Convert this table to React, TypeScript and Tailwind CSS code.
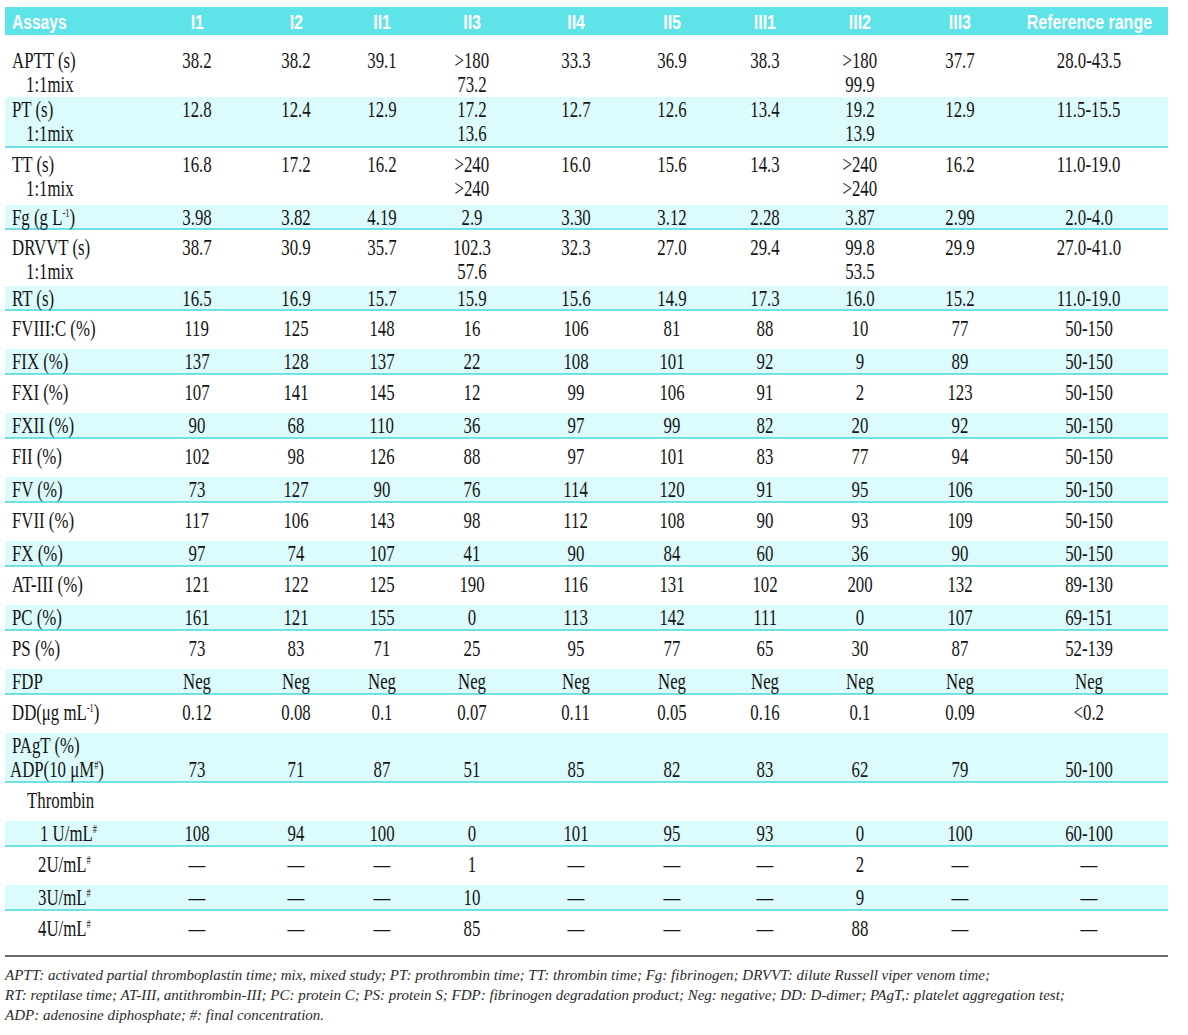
import React from "react";

type Cell = string | string[];

interface RowData {
  label: [React.ReactNode, string][];
  values?: Cell[];
  shaded?: boolean;
  size: string;
  valuePad?: string;
}

const grid =
  "grid grid-cols-[145px_94px_104px_68px_112px_96px_96px_90px_100px_100px_158px]";

const sup = (s: string) => (
  <span className="relative -top-[8px] text-[12px] leading-none">{s}</span>
);

const dash = "—";
const neg = "Neg";
const f150 = "50-150";

const rows: RowData[] = [
  {
    label: [["APTT (s)", "pl-[7px]"], ["1:1mix", "pl-[21px]"]],
    values: ["38.2", "38.2", "39.1", [">180", "73.2"], "33.3", "36.9", "38.3", [">180", "99.9"], "37.7", "28.0-43.5"],
    size: "h-[62px] pt-[13px]",
  },
  {
    label: [["PT (s)", "pl-[7px]"], ["1:1mix", "pl-[21px]"]],
    values: ["12.8", "12.4", "12.9", ["17.2", "13.6"], "12.7", "12.6", "13.4", ["19.2", "13.9"], "12.9", "11.5-15.5"],
    shaded: true,
    size: "h-[51px] pt-0",
  },
  {
    label: [["TT (s)", "pl-[7px]"], ["1:1mix", "pl-[21px]"]],
    values: ["16.8", "17.2", "16.2", [">240", ">240"], "16.0", "15.6", "14.3", [">240", ">240"], "16.2", "11.0-19.0"],
    size: "h-[57px] pt-[4px]",
  },
  {
    label: [[<>Fg (g L{sup("-1")})</>, "pl-[7px]"]],
    values: ["3.98", "3.82", "4.19", "2.9", "3.30", "3.12", "2.28", "3.87", "2.99", "2.0-4.0"],
    shaded: true,
    size: "h-[25px] pt-0",
  },
  {
    label: [["DRVVT (s)", "pl-[7px]"], ["1:1mix", "pl-[21px]"]],
    values: ["38.7", "30.9", "35.7", ["102.3", "57.6"], "32.3", "27.0", "29.4", ["99.8", "53.5"], "29.9", "27.0-41.0"],
    size: "h-[56px] pt-[5px]",
  },
  {
    label: [["RT (s)", "pl-[7px]"]],
    values: ["16.5", "16.9", "15.7", "15.9", "15.6", "14.9", "17.3", "16.0", "15.2", "11.0-19.0"],
    shaded: true,
    size: "h-[25px] pt-0",
  },
  { label: [["FVIII:C (%)", "pl-[7px]"]], values: ["119", "125", "148", "16", "106", "81", "88", "10", "77", f150], size: "h-[38px] pt-[5px]" },
  { label: [["FIX (%)", "pl-[7px]"]], values: ["137", "128", "137", "22", "108", "101", "92", "9", "89", f150], shaded: true, size: "h-[26px] pt-0" },
  { label: [["FXI (%)", "pl-[7px]"]], values: ["107", "141", "145", "12", "99", "106", "91", "2", "123", f150], size: "h-[38px] pt-[5px]" },
  { label: [["FXII (%)", "pl-[7px]"]], values: ["90", "68", "110", "36", "97", "99", "82", "20", "92", f150], shaded: true, size: "h-[26px] pt-0" },
  { label: [["FII (%)", "pl-[7px]"]], values: ["102", "98", "126", "88", "97", "101", "83", "77", "94", f150], size: "h-[38px] pt-[5px]" },
  { label: [["FV (%)", "pl-[7px]"]], values: ["73", "127", "90", "76", "114", "120", "91", "95", "106", f150], shaded: true, size: "h-[26px] pt-0" },
  { label: [["FVII (%)", "pl-[7px]"]], values: ["117", "106", "143", "98", "112", "108", "90", "93", "109", f150], size: "h-[38px] pt-[5px]" },
  { label: [["FX (%)", "pl-[7px]"]], values: ["97", "74", "107", "41", "90", "84", "60", "36", "90", f150], shaded: true, size: "h-[26px] pt-0" },
  { label: [["AT-III (%)", "pl-[7px]"]], values: ["121", "122", "125", "190", "116", "131", "102", "200", "132", "89-130"], size: "h-[38px] pt-[5px]" },
  { label: [["PC (%)", "pl-[7px]"]], values: ["161", "121", "155", "0", "113", "142", "111", "0", "107", "69-151"], shaded: true, size: "h-[26px] pt-0" },
  { label: [["PS (%)", "pl-[7px]"]], values: ["73", "83", "71", "25", "95", "77", "65", "30", "87", "52-139"], size: "h-[38px] pt-[5px]" },
  { label: [["FDP", "pl-[7px]"]], values: [neg, neg, neg, neg, neg, neg, neg, neg, neg, neg], shaded: true, size: "h-[26px] pt-0" },
  {
    label: [[<>DD(μg mL{sup("-1")})</>, "pl-[7px]"]],
    values: ["0.12", "0.08", "0.1", "0.07", "0.11", "0.05", "0.16", "0.1", "0.09", "<0.2"],
    size: "h-[38px] pt-[5px]",
  },
  {
    label: [["PAgT (%)", "pl-[7px]"], [<>ADP(10 μM{sup("#")})</>, "pl-[5px]"]],
    values: ["73", "71", "87", "51", "85", "82", "83", "62", "79", "50-100"],
    shaded: true,
    size: "h-[50px] pt-0",
    valuePad: "pt-[24px]",
  },
  { label: [["Thrombin", "pl-[22px]"]], size: "h-[38px] pt-[5px]" },
  {
    label: [[<>1 U/mL{sup("#")}</>, "pl-[35px]"]],
    values: ["108", "94", "100", "0", "101", "95", "93", "0", "100", "60-100"],
    shaded: true,
    size: "h-[26px] pt-0",
  },
  {
    label: [[<>2U/mL{sup("#")}</>, "pl-[33px]"]],
    values: [dash, dash, dash, "1", dash, dash, dash, "2", dash, dash],
    size: "h-[38px] pt-[5px]",
  },
  {
    label: [[<>3U/mL{sup("#")}</>, "pl-[33px]"]],
    values: [dash, dash, dash, "10", dash, dash, dash, "9", dash, dash],
    shaded: true,
    size: "h-[26px] pt-0",
  },
  {
    label: [[<>4U/mL{sup("#")}</>, "pl-[33px]"]],
    values: [dash, dash, dash, "85", dash, dash, dash, "88", dash, dash],
    size: "h-[44px] pt-[5px]",
  },
];

const headers = ["I1", "I2", "II1", "II3", "II4", "II5", "III1", "III2", "III3", "Reference range"];

const notes = [
  "APTT: activated partial thromboplastin time; mix, mixed study; PT: prothrombin time; TT: thrombin time; Fg: fibrinogen; DRVVT: dilute Russell viper venom time;",
  "RT: reptilase time; AT-III, antithrombin-III; PC: protein C; PS: protein S; FDP: fibrinogen degradation product; Neg: negative; DD: D-dimer; PAgT,: platelet aggregation test;",
  "ADP: adenosine diphosphate; #: final concentration.",
];

function Line({ children, left }: { children: React.ReactNode; left?: boolean }) {
  return (
    <div className="h-6 leading-6 whitespace-nowrap">
      <span className={left ? "inline-block scale-x-[0.7] origin-left" : "inline-block scale-x-[0.7] origin-center"}>
        {children}
      </span>
    </div>
  );
}

function TableRow({ row }: { row: RowData }) {
  return (
    <div
      className={`${grid} ${row.size} ${
        row.shaded ? "bg-[#dcfbfc] border-b-2 border-[#6fe0e7]" : "bg-white"
      }`}
    >
      <div>
        {row.label.map(([text, pad], i) => (
          <div key={i} className={pad}>
            <Line left>{text}</Line>
          </div>
        ))}
      </div>
      {(row.values ?? []).map((v, i) => (
        <div key={i} className={`text-center ${row.valuePad ?? ""}`}>
          {(Array.isArray(v) ? v : [v]).map((t, j) => (
            <Line key={j}>{t}</Line>
          ))}
        </div>
      ))}
    </div>
  );
}

export default function App() {
  return (
    <div className="min-h-[1035px] w-[1188px] bg-white pt-[7px] text-[#141414]">
      <div className="ml-[5px] w-[1163px] font-['Liberation_Serif',serif] text-[24px]">
        <div className={`${grid} h-[28px] items-center bg-[#5ee3e8] font-['Liberation_Sans',sans-serif] text-[20px] font-bold text-white`}>
          <div className="pl-[7px]">
            <span className="inline-block scale-x-[0.78] origin-left">Assays</span>
          </div>
          {headers.map((h) => (
            <div key={h} className="text-center whitespace-nowrap">
              <span className="inline-block scale-x-[0.8] origin-center">{h}</span>
            </div>
          ))}
        </div>
        {rows.map((r, i) => (
          <TableRow key={i} row={r} />
        ))}
        <div className="h-[2px] bg-[#6a6a6a]" />
      </div>
      <div className="ml-[5px] mt-[8px] font-['Liberation_Serif',serif] text-[15px] italic leading-[20px] text-[#2a2a2a]">
        {notes.map((n, i) => (
          <div key={i} className="whitespace-nowrap">
            {n}
          </div>
        ))}
      </div>
    </div>
  );
}
